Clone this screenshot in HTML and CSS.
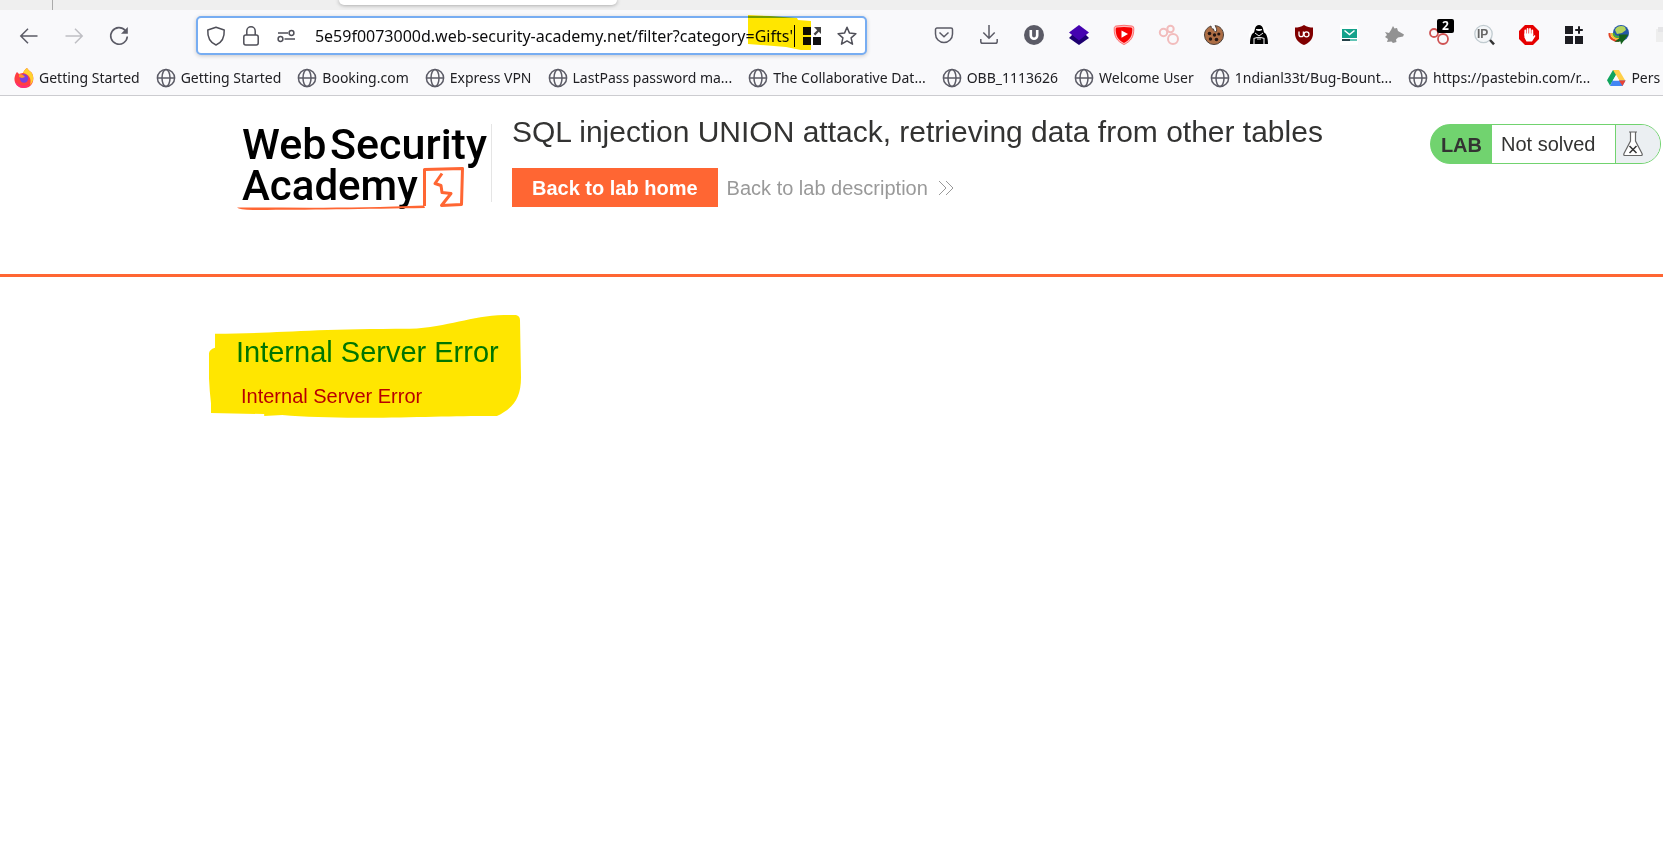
FILE: index.html
```html
<!DOCTYPE html>
<html lang="en">
<head>
<meta charset="utf-8">
<title>SQL injection UNION attack, retrieving data from other tables</title>
<link rel="stylesheet" href="styles.css">
</head>
<body>
<svg class="defs" aria-hidden="true">
  <symbol id="globe" viewBox="0 0 20 20"><g fill="none" stroke="#5b5b66" stroke-width="1.5"><circle cx="10" cy="10" r="8.6"/><ellipse cx="10" cy="10" rx="4" ry="8.6"/><path d="M1.4 10h17.2"/></g></symbol>
</svg>
<header class="browser">
  <div class="tabstrip"><div class="tab-edge"></div><div class="active-tab"></div></div>
  <div class="toolbar">
    <nav class="history" aria-label="History">
      <button class="tool" aria-label="Back"><svg viewBox="0 0 20 20"><path d="M18.500 10H2M9 2.800 1.800 10 9 17.200" fill="none" stroke="#5b5b66" stroke-width="1.500"/></svg></button>
      <button class="tool" aria-label="Forward" disabled><svg viewBox="0 0 20 20"><path d="M1.500 10H18M11 2.800 18.200 10 11 17.200" fill="none" stroke="#bfbfc4" stroke-width="1.500"/></svg></button>
      <button class="tool" aria-label="Reload"><svg viewBox="0 0 20 20"><path d="M16.300 4.500A8.300 8.300 0 1 0 18.300 10.500" fill="none" stroke="#5b5b66" stroke-width="1.600"/><path d="M18.800 1v6.800H12z" fill="#5b5b66"/></svg></button>
    </nav>
    <div class="urlbar">
      <button class="tool" aria-label="Tracking protection"><svg viewBox="0 0 20 20"><path d="M10 1.200 18.200 4c.4 7-2.200 12.500-8.200 15C4 16.500 1.400 11 1.800 4z" fill="none" stroke="#4f4f58" stroke-width="1.500" stroke-linejoin="round"/></svg></button>
      <button class="tool" aria-label="Connection secure"><svg viewBox="0 0 20 20"><path d="M5.800 9V5a4.200 4.200 0 0 1 8.400 0v4" fill="none" stroke="#4f4f58" stroke-width="1.500"/><rect x="2.800" y="9" width="14.400" height="10" rx="2" fill="none" stroke="#4f4f58" stroke-width="1.500"/></svg></button>
      <button class="tool" aria-label="Permissions"><svg viewBox="0 0 20 20"><g fill="none" stroke="#4f4f58" stroke-width="1.500"><path d="M2 7h10M8.500 13H19"/><circle cx="15.500" cy="7" r="2.400"/><circle cx="4.500" cy="13" r="2.400"/></g></svg></button>
      <input class="address" type="text" aria-label="Address" value="5e59f0073000d.web-security-academy.net/filter?category=Gifts'">
      <span class="caret"></span>
      <button class="tool" aria-label="Open container"><svg viewBox="0 0 20 20"><path d="M1 1h8v8H1zM1 11h8v8H1zM11 11h8v8h-8z" fill="#111"/><path d="M12 1h7v7l-2.200-2.200-3.600 3.600-1.600-1.600 3.600-3.600z" fill="#444"/></svg></button>
      <button class="tool" aria-label="Bookmark this page"><svg viewBox="0 0 20 20"><path d="m10 1.300 2.500 5.800 6.400.6-4.800 4.200 1.400 6.300-5.500-3.300-5.500 3.300 1.400-6.300L1.100 7.700l6.400-.6z" fill="none" stroke="#4f4f58" stroke-width="1.500" stroke-linejoin="round"/></svg></button>
      <svg class="url-mark" viewBox="0 0 64 36" aria-hidden="true"><path d="M0 0 22 1 49 3 50 5 63 6 63 35 53 35 38 32 0 29z" fill="#ffe600"/></svg>
    </div>
    <div class="extensions">
      <button class="tool" aria-label="Save to Pocket"><svg viewBox="0 0 20 20"><path d="M3 3h14a1.500 1.500 0 0 1 1.500 1.500V9a8.500 8.500 0 0 1-17 0V4.500A1.500 1.500 0 0 1 3 3zM5.500 7.500 10 11.800l4.500-4.300" fill="none" stroke="#5b5b66" stroke-width="1.500"/></svg></button>
      <button class="tool" aria-label="Downloads"><svg viewBox="0 0 20 20"><path d="M10 0v13M4.300 7.500 10 13.200l5.700-5.700M1.800 14v2.500A1.800 1.800 0 0 0 3.600 18.300h12.800a1.800 1.800 0 0 0 1.800-1.800V14" fill="none" stroke="#5b5b66" stroke-width="1.500"/></svg></button>
      <button class="tool" aria-label="Account"><svg viewBox="0 0 20 20"><circle cx="10" cy="10" r="10" fill="#5b5b66"/><path d="M6.800 5v5.500a3.200 3.200 0 0 0 6.400 0V5" fill="none" stroke="#fff" stroke-width="2.600"/></svg></button>
      <button class="tool" aria-label="Layers"><svg viewBox="0 0 20 20"><path d="m0 13 3-3h14l3 3-10 7z" fill="#1d0070"/><path d="M10 0 20 7.500 10 15.500 0 7.500z" fill="#4503b0"/></svg></button>
      <button class="tool" aria-label="Video enhancer"><svg viewBox="0 0 20 20"><path d="M2 1q8-1.500 16 0 2 .3 1.800 2.500C20 12 17 16 10 19.600 3 16 0 12 .2 3.500 0 1.300 2 1 2 1z" fill="#fbb" stroke="#f44" stroke-width=".7"/><path d="M3 2.500q7-1 14 0 1.400.2 1.300 1.700C18.300 11 16 14.800 10 18 4 14.800 1.700 11 1.700 4.200 1.600 2.700 3 2.500 3 2.500z" fill="#f60000"/><path d="m7.500 5.500 6.500 3.600-6.500 3.700z" fill="#fff"/></svg></button>
      <button class="tool" aria-label="Hackbar"><svg viewBox="0 0 20 20"><g fill="none" stroke="#f2bcbc" stroke-width="2"><circle cx="4.500" cy="7.500" r="3.700"/><circle cx="11.500" cy="4" r="3.200"/><circle cx="14" cy="14" r="5"/></g></svg></button>
      <button class="tool" aria-label="Cookie editor"><svg viewBox="0 0 20 20"><path d="M7 1c0 2 1 3 2.500 3 0 2 1.500 3 3 2.500C13 4 12 2 11 .7 16 .7 19.500 5 19.500 10a9.500 9.500 0 1 1-19 0C.5 6 3 2.500 7 1z" fill="#ad6e45" stroke="#4c4039" stroke-width="1"/><g fill="#251713"><circle cx="5.500" cy="8.500" r="1.800"/><circle cx="10.500" cy="10" r="1.700"/><circle cx="14.800" cy="9" r="1.600"/><circle cx="6.500" cy="14" r="1.700"/><circle cx="12.500" cy="14.500" r="1.800"/></g></svg></button>
      <button class="tool" aria-label="Hack tools"><svg viewBox="0 0 20 20"><circle cx="10" cy="10" r="10" fill="#fff"/><path d="M10 0c2 0 3.500 1.500 4 3.500l1 4c2.500 1 4 5 4 11.500H1C1 12.500 2.500 8.500 5 7.500l1-4C6.500 1.500 8 0 10 0z" fill="#000"/><path d="M7 4.500h6l-1.500 1h-3zM6 8l4 3 4-3" fill="none" stroke="#eee" stroke-width="1"/><path d="M5 19v-5.500l3-1h4l3 1V19M8 14h4" fill="none" stroke="#ddd" stroke-width="1.200"/></svg></button>
      <button class="tool" aria-label="Content blocker"><svg viewBox="0 0 20 20"><path d="M10 0c3 2 6 2.500 9 2.500V9c0 5-4 9-9 11C5 18 1 14 1 9V2.500C4 2.500 7 2 10 0z" fill="#800000"/><path d="M5 6.500v3a2.200 2.200 0 0 0 4.400 0v-3" fill="none" stroke="#fff" stroke-width="1.300"/><circle cx="12.500" cy="9.300" r="2.500" fill="none" stroke="#fff" stroke-width="1.300"/></svg></button>
      <button class="tool" aria-label="Temporary mail"><svg viewBox="0 0 20 20"><path d="M1 0h18v20H1z" fill="#fff"/><path d="M3 4h15v9H3z" fill="#15a28b"/><path d="m5.500 5.500 5 4 5-4" fill="none" stroke="#fff" stroke-width="1.500"/><path d="M3 15h8" stroke="#27444a" stroke-width="2"/><path d="M11 15h7" stroke="#63c5b6" stroke-width="2"/></svg></button>
      <button class="tool" aria-label="Scanner"><svg viewBox="0 0 20 20"><path d="m7 5 2-4 1.500 2.500L13 3l1 3 6 3.500-1 2-5 1-2 2 .5 2.500L9 18l-1.500-1.500L3 17l1-3-3-2 2-2-2-3 4 1z" fill="#929292"/></svg></button>
      <button class="tool" aria-label="Hackbar, 2 notifications"><svg viewBox="0 0 20 20"><g fill="none" stroke="#cf5353" stroke-width="1.800"><circle cx="5" cy="8" r="4"/><circle cx="14" cy="14" r="5"/><circle cx="12" cy="4" r="3"/></g></svg><span class="badge">2</span></button>
      <button class="tool" aria-label="IP lookup"><svg viewBox="0 0 20 20"><circle cx="9.500" cy="9" r="8.700" fill="#f4f6f8" stroke="#c1cbd0" stroke-width="1.300"/><path d="m16 15 4 4.300" stroke="#333" stroke-width="2.500"/><text class="ip-label" x="3" y="13">IP</text></svg></button>
      <button class="tool" aria-label="Ad blocker"><svg viewBox="0 0 20 20"><path d="M6 0h8l6 6v8l-6 6H6l-6-6V6z" fill="#e60000"/><path d="M6.300 10V5.500M8.600 9V4M11 9V4M13.300 10V5.500" stroke="#fff" stroke-width="1.800" stroke-linecap="round"/><path d="M5.400 8.500h8.800v3l1.500-1.500.8 1-3.500 5.500H7.500l-2.100-4z" fill="#fff"/></svg></button>
      <button class="tool" aria-label="Extensions"><svg viewBox="0 0 20 20"><path d="M1 1h8v8H1zM1 11h8v8H1zM11 11h8v8h-8z" fill="#1d1d22"/><path d="M15 1.200v7.600M11.200 5h7.600" stroke="#1d1d22" stroke-width="2"/></svg></button>
      <button class="tool" aria-label="Download manager"><svg viewBox="0 0 20 20"><circle cx="12" cy="8" r="8" fill="#2458a8"/><path d="M6 5c1-4 7-5 10-3l1 3-4 3-5 1z" fill="#b4d45f"/><path d="M.5 8C0 13 4 16 10 16" fill="none" stroke="#e24324" stroke-width="2"/><path d="M2.500 8c0 4 3 6 8 6" fill="none" stroke="#f8c22c" stroke-width="2"/><path d="M4.500 8c0 3 3 4 6 4" fill="none" stroke="#49a93d" stroke-width="2"/><path d="M10 9.500h9.500L12 19.500l-.5-3-6 .5 5-4z" fill="#14611d"/></svg></button>
      <button class="tool" aria-label="More"><svg viewBox="0 0 20 20"><path d="M2 4h16v13H2z" fill="#eee"/><path d="M4 2h14v5H4z" fill="#e5e5e7"/></svg></button>
    </div>
  </div>
  <nav class="bookmarks" aria-label="Bookmarks">
    <a href="#"><svg viewBox="0 0 20 20"><path d="M13 0c1 2 3 3 4.500 4.500C21 9 20 20 10 20 3 20 0 15 .5 10 1 7 2 5 3 4l2 2c2-1 4-1 4-1 1-2 2-4 4-5z" fill="#ff3d43"/><path d="M13 0c1 2 3 3 4.500 4.500C20 8 20 14 16 17c2-6-1-11-7-12 1-2 2-4 4-5z" fill="#ffd12e"/><path d="M1 13c3 5 10 6 15 3-2 3-4 4-7 4-4 0-7-3-8-7z" fill="#ff2b7a"/><circle cx="10" cy="10.500" r="4.200" fill="#7a3fe0"/><path d="M5 6c2 0 5 1 6 3l-3 1-3-1z" fill="#ff9130"/></svg>Getting Started</a>
    <a href="#"><svg><use href="#globe"/></svg>Getting Started</a>
    <a href="#"><svg><use href="#globe"/></svg>Booking.com</a>
    <a href="#"><svg><use href="#globe"/></svg>Express VPN</a>
    <a href="#"><svg><use href="#globe"/></svg>LastPass password ma...</a>
    <a href="#"><svg><use href="#globe"/></svg>The Collaborative Dat...</a>
    <a href="#"><svg><use href="#globe"/></svg>OBB_1113626</a>
    <a href="#"><svg><use href="#globe"/></svg>Welcome User</a>
    <a href="#"><svg><use href="#globe"/></svg>1ndianl33t/Bug-Bount...</a>
    <a href="#"><svg><use href="#globe"/></svg>https://pastebin.com/r...</a>
    <a href="#"><svg viewBox="0 0 20 20"><path d="M7 2h6L4 17.500l-3-5.200z" fill="#0fa45c"/><path d="M7 2h6l6.500 11h-6z" fill="#ffcf48"/><path d="M6.500 12.500h13L16.500 18H4z" fill="#4285f4"/><path d="M13 12.500h6.500L16.500 18z" fill="#ea4335"/><path d="m10 7 3.200 5.500H6.800z" fill="#f9f9fb"/></svg>Pers</a>
  </nav>
</header>
<section class="lab-header">
  <svg class="logo" viewBox="0 0 250 90" role="img" aria-label="Web Security Academy">
    <text x="5" y="43">Web</text><text x="93" y="43">Security</text><text class="second" x="5" y="84">Academy</text>
    <path class="logo-rule" d="M0 91.500c60 0 120 1 187-2l1 2.600c-60 1-130 2-172 1.900q-14-.5-16-2.500z"/>
    <path class="logo-line" d="M187.500 90V53.500l38-1-1 36-20 1 9.500-12-9-1-1-7-6-2 7-10"/>
  </svg>
  <div class="lab-title">
    <h2>SQL injection UNION attack, retrieving data from other tables</h2>
    <div class="links">
      <a class="home" href="#">Back to lab home</a>
      <a class="description" href="#">Back to lab description <svg viewBox="0 0 16 16"><path d="m1 1 7 7-7 7M8 1l7 7-7 7"/></svg></a>
    </div>
  </div>
  <div class="status">
    <strong>LAB</strong><span class="state">Not solved</span>
    <span class="flask"><svg viewBox="0 0 20 26"><path d="M6 1h8M7.500 1v9L1 22.500c-.6 1.500 0 2 1 2h16c1 0 1.600-.5 1-2L12.500 10V1" fill="#fff" stroke="#666" stroke-width="1.200"/><path d="m6.500 15 7 7M13.500 15l-7 7" stroke="#333" stroke-width="1.500"/></svg></span>
  </div>
</section>
<main>
  <div class="error">
    <svg class="error-mark" viewBox="0 0 312 105" preserveAspectRatio="none" aria-hidden="true"><path d="M6 20C65 20 100 15 200 15 240 13 260 2 294 1h12q4 1 4 5l1 58c0 21-8 31-24 39-50-1-150 5-214-1l-18 1v-2L2 100V90Q-1 65 0 40 0 36 6 34z" fill="#ffe600"/></svg>
    <h1>Internal Server Error</h1>
    <p>Internal Server Error</p>
  </div>
</main>
</body>
</html>
```
FILE: styles.css
```css
* { box-sizing: border-box; }
body { margin: 0; background: #fff; color: #333332; font-family: "Liberation Sans", Arial, sans-serif; overflow-x: hidden; }
a { text-decoration: none; color: inherit; }
.defs { position: absolute; width: 0; height: 0; }
.browser { background: #f9f9fb; border-bottom: 1px solid #ccccd0; font-family: "Noto Sans", "Open Sans", sans-serif; overflow: hidden; }
.tabstrip { display: flex; height: 10px; background: #efefef; overflow: hidden; }
.tab-edge { width: 53px; border-right: 1px solid #aaa; margin-right: 286px; }
.active-tab { width: 278px; height: 5px; background: #fff; border-radius: 0 0 5px 5px; box-shadow: 0 0 4px #0006; }
.toolbar { display: flex; align-items: center; height: 51px; }
.tool { position: relative; flex: none; width: 20px; height: 20px; padding: 0; border: 0; background: none; }
.tool svg { display: block; width: 20px; height: 20px; overflow: visible; }
.history { display: flex; flex: none; gap: 25px; padding-left: 19px; width: 196px; }
.urlbar { position: relative; display: flex; align-items: center; flex: none; width: 671px; height: 39px; padding: 0 8px; gap: 15px; background: #fff; border: 2px solid #77adf2; border-radius: 5px; box-shadow: 0 1px 4px #0003; }
.address { flex: 1; min-width: 0; height: 30px; padding: 0; margin-right: -14px; border: 0; outline: 0; background: none; color: #0c0c0d; font: 16px "Noto Sans", "Open Sans", sans-serif; text-align: right; }
.caret { width: 1px; height: 22px; background: #000; margin-right: -8px; }
.url-mark { position: absolute; right: 53px; top: -3px; width: 64px; height: 36px; mix-blend-mode: multiply; pointer-events: none; }
.extensions { display: flex; flex: none; gap: 25px; margin-left: 67px; padding-bottom: 2px; }
.badge { position: absolute; left: 8px; top: -6px; width: 17px; height: 14px; border-radius: 2px; background: #000; color: #fff; font: bold 12px/14px "Noto Sans", sans-serif; text-align: center; }
.ip-label { font: bold 12px "Liberation Sans", sans-serif; fill: #666; }
.bookmarks { display: flex; align-items: center; height: 34px; padding-left: 14px; gap: 16px; font-size: 14px; line-height: 20px; color: #202024; white-space: nowrap; }
.bookmarks a { display: flex; flex: none; align-items: center; gap: 5px; }
.bookmarks svg { width: 20px; height: 20px; flex: none; }
.lab-header { display: flex; align-items: flex-start; height: 181px; padding: 20px 2px 0 237px; border-bottom: 3px solid #ff6633; }
.logo { flex: none; width: 250px; height: 90px; overflow: visible; }
.logo text { font: 500 43px Roboto, sans-serif; fill: #000; }
.logo .second { font-size: 42px; }
.logo-rule { fill: #ff6633; }
.logo-line { fill: none; stroke: #ff6633; stroke-width: 3; stroke-linejoin: round; }
.lab-title { flex: 1; margin: 8px 0 0 4px; padding-left: 20px; border-left: 1px solid #e5e5e5; height: 78px; }
h2 { margin: -8px 0 20px; font-size: 30px; line-height: 32px; font-weight: 400; }
.links { display: flex; align-items: center; gap: 9px; font-size: 20px; }
.home { padding: 1px 20px 0; line-height: 38px; background: #ff6633; color: #fff; font-weight: 700; }
.description { display: flex; align-items: center; gap: 10px; padding-top: 1px; color: #999; }
.description svg { width: 16px; height: 16px; fill: none; stroke: #999; stroke-width: 1; }
.status { display: flex; flex: none; height: 40px; margin-top: 8px; border: 1px solid #71d36f; border-radius: 20px; overflow: hidden; font-size: 20px; line-height: 38px; background: linear-gradient(90deg, #71d36f 50%, #ebeff2 50%); }
.status strong { padding: 0 10px; background: #71d36f; line-height: 40px; }
.state { width: 124px; padding-left: 9px; background: #fff; border-right: 1px solid #71d36f; }
.flask { display: flex; align-items: center; width: 44px; padding-left: 7px; background: #ebeff2; }
.flask svg { width: 20px; height: 26px; }
main { padding: 37px 209px; }
.error { position: relative; width: 313px; padding: 22px 0 9px 27px; }
.error-mark { position: absolute; inset: 0; width: 100%; height: 100%; }
.error h1 { position: relative; margin: 0 0 14px; font-size: 29px; line-height: 33px; font-weight: 400; color: #007500; white-space: nowrap; }
.error p { position: relative; margin: 0; padding-left: 5px; font-size: 20px; line-height: 26px; color: #b80000; }
```
